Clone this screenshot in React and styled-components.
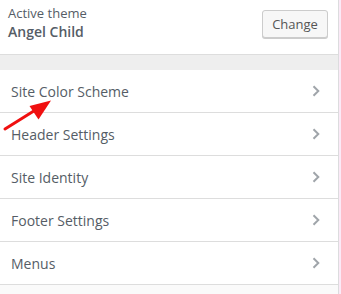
import React from "react";
import styled, { createGlobalStyle } from "styled-components";

const Global = createGlobalStyle`
  html, body { margin: 0; padding: 0; }
  body {
    background: #fbeaf7;
    font-family: "Open Sans", "Noto Sans", sans-serif;
    width: 341px;
    height: 294px;
    overflow: hidden;
  }
`;

const Panel = styled.div`
  position: relative;
  width: 338px;
  height: 294px;
  background: #fafafa;
  border-right: 1px solid #dcdcde;
  display: flex;
  flex-direction: column;
`;

const ThemeHeader = styled.div`
  height: 55px;
  box-sizing: border-box;
  padding: 4px 10px 0 8px;
  background: #fff;
  border-bottom: 1px solid #ddd;
  display: flex;
  align-items: flex-start;
  justify-content: space-between;
`;

const ThemeInfo = styled.div`
  display: flex;
  flex-direction: column;
  color: #555d66;
`;

const ThemeLabel = styled.span`
  font-size: 13px;
  line-height: 18px;
  font-weight: 400;
`;

const ThemeName = styled.span`
  font-size: 14px;
  line-height: 20px;
  font-weight: 600;
`;

const ChangeButton = styled.button`
  margin-top: 6px;
  width: 66px;
  height: 28px;
  box-sizing: border-box;
  border: 1px solid #ccc;
  border-radius: 3px;
  background: #f7f7f7;
  box-shadow: 0 1px 0 #ccc;
  color: #555;
  font-family: inherit;
  font-size: 13px;
  padding: 0;
  cursor: pointer;
`;

const Spacer = styled.div`
  height: 15px;
  background: #eee;
`;

const SectionList = styled.ul`
  list-style: none;
  margin: 0;
  padding: 0;
`;

const Section = styled.li`
  height: 42px;
  background: #fff;
  border-bottom: 1px solid #ddd;
  display: flex;
  align-items: center;
  justify-content: space-between;
  padding: 0 18px 0 11px;
  color: #555d66;
  font-size: 14px;
  font-weight: 500;
`;

const Chevron = styled.svg`
  width: 8px;
  height: 12px;
  flex: none;
`;

const Arrow = styled.svg`
  position: absolute;
  left: 0;
  top: 96px;
  width: 56px;
  height: 38px;
  pointer-events: none;
`;

const sections = [
  "Site Color Scheme",
  "Header Settings",
  "Site Identity",
  "Footer Settings",
  "Menus",
];

export default function App() {
  return (
    <>
      <Global />
      <Panel>
        <ThemeHeader>
          <ThemeInfo>
            <ThemeLabel>Active theme</ThemeLabel>
            <ThemeName>Angel Child</ThemeName>
          </ThemeInfo>
          <ChangeButton>Change</ChangeButton>
        </ThemeHeader>
        <Spacer />
        <SectionList>
          {sections.map((s) => (
            <Section key={s}>
              {s}
              <Chevron viewBox="0 0 8 12">
                <path d="M1.5 1.2 L6.3 6 L1.5 10.8" fill="none" stroke="#a0a5aa" strokeWidth="2" />
              </Chevron>
            </Section>
          ))}
        </SectionList>
        <Arrow viewBox="0 96 56 38">
          <line x1="5" y1="129" x2="37" y2="109" stroke="#f01010" strokeWidth="3" strokeLinecap="round" />
          <polygon points="51,100.5 29.5,106 38.5,119.5" fill="#f01010" />
        </Arrow>
      </Panel>
    </>
  );
}
